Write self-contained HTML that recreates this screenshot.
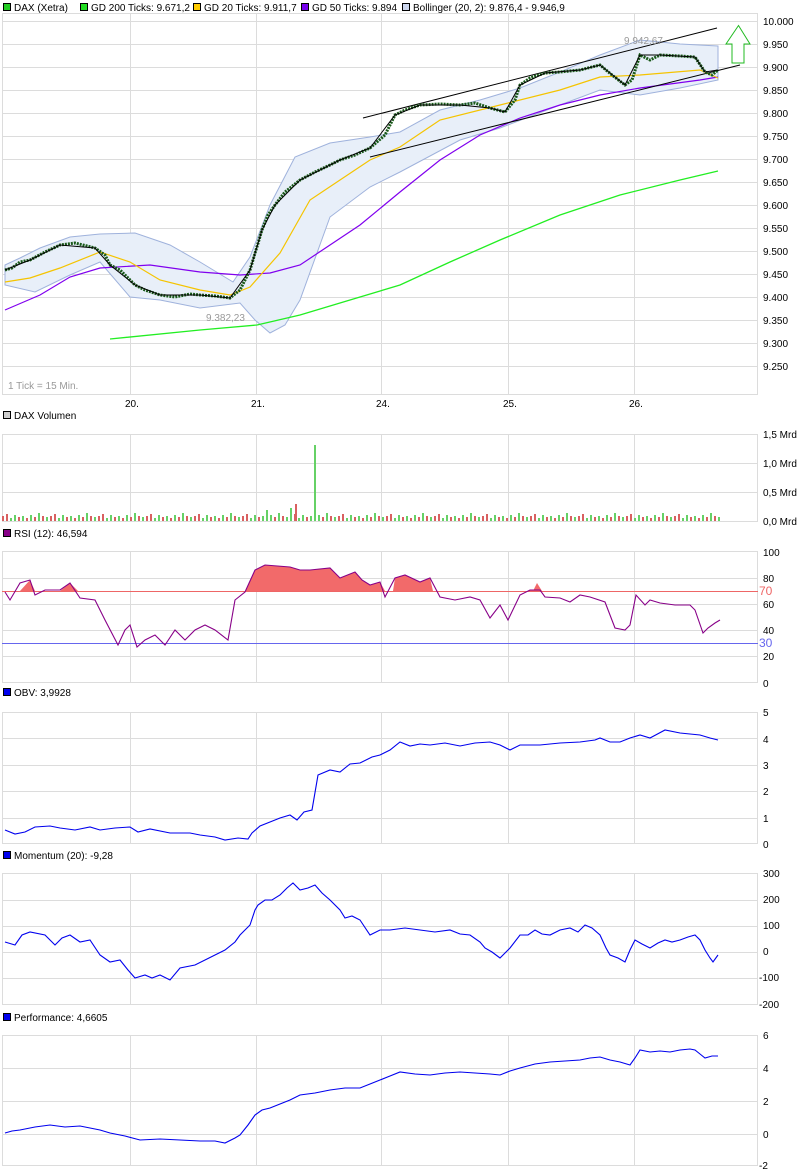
<!DOCTYPE html>
<html><head><meta charset="utf-8"><style>
body{margin:0;background:#fff;width:798px;height:1176px;overflow:hidden;font-family:"Liberation Sans","DejaVu Sans",sans-serif}
svg{display:block}
text{font-family:"Liberation Sans","DejaVu Sans",sans-serif;font-size:10px;fill:#000}
</style></head><body>
<svg width="798" height="1176" viewBox="0 0 798 1176" xmlns="http://www.w3.org/2000/svg">
<defs>
<pattern id="vol" x="2" y="0" width="48" height="522" patternUnits="userSpaceOnUse">
<rect x="0" y="516" width="2" height="5" fill="#d96060"/><rect x="4" y="514" width="2" height="7" fill="#d96060"/><rect x="8" y="518" width="2" height="3" fill="#66d166"/><rect x="12" y="515" width="2" height="6" fill="#66d166"/><rect x="16" y="517" width="2" height="4" fill="#d96060"/><rect x="20" y="516" width="2" height="5" fill="#66d166"/><rect x="24" y="518" width="2" height="3" fill="#d96060"/><rect x="28" y="515" width="2" height="6" fill="#66d166"/><rect x="32" y="517" width="2" height="4" fill="#d96060"/><rect x="36" y="513" width="2" height="8" fill="#66d166"/><rect x="40" y="516" width="2" height="5" fill="#d96060"/><rect x="44" y="517" width="2" height="4" fill="#66d166"/>
</pattern>
</defs>
<!-- Legend -->
<g>
<rect x="3.5" y="3.5" width="7" height="7" fill="#22cc22" stroke="#000"/><text x="14" y="11">DAX (Xetra)</text>
<rect x="80.5" y="3.5" width="7" height="7" fill="#22dd22" stroke="#000"/><text x="91" y="11">GD 200 Ticks: 9.671,2</text>
<rect x="193.5" y="3.5" width="7" height="7" fill="#ffcc00" stroke="#000"/><text x="204" y="11">GD 20 Ticks: 9.911,7</text>
<rect x="301.5" y="3.5" width="7" height="7" fill="#7700ee" stroke="#000"/><text x="312" y="11">GD 50 Ticks: 9.894</text>
<rect x="402.5" y="3.5" width="7" height="7" fill="#ccd6ee" stroke="#000"/><text x="413" y="11">Bollinger (20, 2): 9.876,4 - 9.946,9</text>
</g>
<!-- Main frame -->
<g stroke="#dcdcdc" stroke-width="1" fill="none">
<rect x="2.5" y="13.5" width="755" height="381"/>
<path d="M2 21.5H758M2 44.5H758M2 67.5H758M2 90.5H758M2 113.5H758M2 136.5H758M2 159.5H758M2 182.5H758M2 205.5H758M2 228.5H758M2 251.5H758M2 274.5H758M2 297.5H758M2 320.5H758M2 343.5H758M2 366.5H758"/>
<path d="M130.5 13V395M256.5 13V395M381.5 13V395M508.5 13V395M634.5 13V395"/>
</g>
<g font-size="10">
<text x="763" y="25">10.000</text><text x="763" y="48">9.950</text><text x="763" y="71">9.900</text><text x="763" y="94">9.850</text><text x="763" y="117">9.800</text><text x="763" y="140">9.750</text><text x="763" y="163">9.700</text><text x="763" y="186">9.650</text><text x="763" y="209">9.600</text><text x="763" y="232">9.550</text><text x="763" y="255">9.500</text><text x="763" y="278">9.450</text><text x="763" y="301">9.400</text><text x="763" y="324">9.350</text><text x="763" y="347">9.300</text><text x="763" y="370">9.250</text>
<text x="125" y="407">20.</text><text x="251" y="407">21.</text><text x="376" y="407">24.</text><text x="503" y="407">25.</text><text x="629" y="407">26.</text>
<text x="8" y="389" fill="#999" style="fill:#999">1 Tick = 15 Min.</text>
</g>
<!-- Bollinger band -->
<path d="M5 265L20 258L40 248L70 237L100 234L135 233L170 245L200 262L233 282L250 257L270 205L295 157L330 143L370 137L400 132L440 110L480 100L520 88L560 72L600 55L640 40L680 44L718 46L718 80L680 88L640 95L600 90L560 105L500 128L460 140L400 172L370 187L330 217L300 300L285 325L270 333L255 320L240 303L200 308L160 300L130 297L100 262L70 275L35 292L5 285Z" fill="#e8eff9" stroke="#9fb2dc" stroke-width="1"/>
<!-- GD200 -->
<polyline points="110,339 200,330 257,325 300,315 350,300 400,285 450,262 500,240 560,215 620,195 680,180 718,171" fill="none" stroke="#22ee22" stroke-width="1.3"/>
<!-- GD50 -->
<polyline points="5,310 40,295 70,277 100,268 150,265 200,272 240,275 270,273 300,265 330,245 360,225 400,192 440,160 480,135 520,118 560,105 600,95 640,88 700,80 718,77" fill="none" stroke="#8000ee" stroke-width="1.2"/>
<!-- GD20 -->
<polyline points="5,282 30,278 60,268 100,252 130,262 160,280 200,290 230,295 250,287 280,253 310,200 340,180 370,160 400,147 440,120 500,105 560,90 600,77 640,75 700,70 718,78" fill="none" stroke="#f5c400" stroke-width="1.2"/>
<!-- trend lines -->
<path d="M363 118L717 28M370 157L740 65" stroke="#000" stroke-width="1"/>
<!-- price -->
<polyline points="5,270 12,268 20,262 30,260 45,252 60,245 75,243 95,248 105,255 110,265 120,270 135,285 145,290 160,295 175,297 190,294 200,295 215,296 230,298 240,290 250,270 256,250 262,230 268,215 275,205 285,192 300,180 315,172 330,165 340,160 355,155 370,148 385,135 395,115 405,110 420,105 440,104 460,105 475,103 490,108 505,112 515,100 520,85 530,78 545,73 560,72 580,70 600,65 612,75 625,85 632,80 640,55 650,60 660,55 680,56 695,57 705,72 712,75 718,70" fill="none" stroke="#1a5a1a" stroke-width="3" stroke-dasharray="2 1"/>
<polyline points="5,270 30,260 60,245 95,248 110,265 135,285 160,295 200,295 230,298 250,270 262,230 275,205 300,180 340,160 370,148 395,115 420,105 460,105 490,108 505,112 520,85 545,73 580,70 600,65 625,85 640,55 660,55 695,57 705,72 718,70" fill="none" stroke="#000" stroke-width="1"/>
<text x="624" y="44" style="fill:#999">9.942,67</text>
<text x="206" y="321" style="fill:#999">9.382,23</text>
<!-- arrow -->
<path d="M738.5 25.5L750 44H744V63H732V44H726Z" fill="#fff" stroke="#22bb22" stroke-width="1"/>

<!-- Volume -->
<rect x="3.5" y="411.5" width="7" height="7" fill="#ccc" stroke="#000"/><text x="14" y="419">DAX Volumen</text>
<g stroke="#dcdcdc" fill="none">
<rect x="2.5" y="434.5" width="755" height="87"/>
<path d="M2 463.5H758M2 492.5H758M130.5 434V522M256.5 434V522M381.5 434V522M508.5 434V522M634.5 434V522"/>
</g>
<rect x="2" y="505" width="718" height="16" fill="url(#vol)"/>
<rect x="295" y="504" width="2" height="17" fill="#d96060"/>
<rect x="314" y="445" width="2" height="76" fill="#66d166"/>
<rect x="266" y="510" width="2" height="11" fill="#66d166"/><rect x="290" y="508" width="2" height="13" fill="#66d166"/>
<text x="763" y="438">1,5 Mrd</text><text x="763" y="467">1,0 Mrd</text><text x="763" y="496">0,5 Mrd</text><text x="763" y="525">0,0 Mrd</text>

<!-- RSI -->
<rect x="3.5" y="529.5" width="7" height="7" fill="#880088" stroke="#000"/><text x="14" y="537">RSI (12): 46,594</text>
<g stroke="#dcdcdc" fill="none">
<rect x="2.5" y="551.5" width="755" height="131"/>
<path d="M2 578.5H758M2 604.5H758M2 630.5H758M2 656.5H758M130.5 551V683M256.5 551V683M381.5 551V683M508.5 551V683M634.5 551V683"/>
</g>
<path d="M20 591L30 580L35 591ZM60 591L70 583L78 591ZM245 591L255 570L265 565L290 567L300 570L310 570L330 568L340 578L355 572L362 580L370 585L380 582L385 591ZM393 591L395 578L405 575L420 582L430 578L433 591ZM528 591L530 590L540 590L542 591ZM533 591L537 583L542 591Z" fill="#f26a6a"/>
<path d="M2 591.5H758" stroke="#ee6666"/>
<path d="M2 643.5H758" stroke="#6666ee"/>
<polyline points="5,592 10,600 20,583 30,580 35,595 45,590 60,590 70,583 80,598 95,600 105,620 118,645 125,630 130,625 137,647 145,640 155,635 165,645 175,630 185,640 195,630 205,625 215,630 228,640 235,600 245,592 255,570 265,565 290,567 300,570 310,570 330,568 340,578 355,572 362,580 370,585 380,582 385,597 395,578 405,575 420,582 430,578 440,597 455,600 470,597 480,600 490,618 500,605 508,620 520,595 530,590 540,590 545,597 560,598 570,602 580,595 590,597 605,602 615,628 625,630 630,625 636,595 645,605 650,600 660,603 675,605 690,605 695,610 703,633 708,628 715,623 720,620" fill="none" stroke="#880088" stroke-width="1.1"/>
<text x="763" y="556">100</text><text x="763" y="582">80</text><text x="759" y="595" style="fill:#ee6666;font-size:12px">70</text><text x="763" y="608">60</text><text x="763" y="634">40</text><text x="759" y="647" style="fill:#6666ee;font-size:12px">30</text><text x="763" y="660">20</text><text x="763" y="687">0</text>

<!-- OBV -->
<rect x="3.5" y="688.5" width="7" height="7" fill="#0000ee" stroke="#000"/><text x="14" y="696">OBV: 3,9928</text>
<g stroke="#dcdcdc" fill="none">
<rect x="2.5" y="712.5" width="755" height="131"/>
<path d="M2 738.5H758M2 765.5H758M2 791.5H758M2 818.5H758M130.5 712V844M256.5 712V844M381.5 712V844M508.5 712V844M634.5 712V844"/>
</g>
<polyline points="5,830 15,834 25,832 35,827 50,826 60,828 75,830 90,827 100,830 115,828 130,827 138,832 150,829 170,833 190,833 200,835 215,837 225,840 238,838 248,839 252,833 260,826 270,822 280,818 290,815 297,820 304,812 312,810 318,775 330,770 340,772 350,764 360,763 372,757 380,755 390,750 400,742 410,746 420,744 430,745 445,743 460,746 475,743 490,742 500,745 510,750 520,745 540,745 560,743 580,742 595,740 600,738 610,742 620,742 630,738 640,735 650,738 665,730 680,733 700,735 710,738 718,740" fill="none" stroke="#0000ee" stroke-width="1.1"/>
<text x="763" y="716">5</text><text x="763" y="743">4</text><text x="763" y="769">3</text><text x="763" y="795">2</text><text x="763" y="822">1</text><text x="763" y="848">0</text>

<!-- Momentum -->
<rect x="3.5" y="851.5" width="7" height="7" fill="#0000ee" stroke="#000"/><text x="14" y="859">Momentum (20): -9,28</text>
<g stroke="#dcdcdc" fill="none">
<rect x="2.5" y="873.5" width="755" height="131"/>
<path d="M2 900.5H758M2 926.5H758M2 952.5H758M2 978.5H758M130.5 873V1005M256.5 873V1005M381.5 873V1005M508.5 873V1005M634.5 873V1005"/>
</g>
<polyline points="5,942 15,945 22,935 30,932 45,935 55,945 62,938 70,935 80,942 90,940 100,955 110,962 120,960 128,970 135,978 145,975 152,978 160,975 170,980 180,968 195,965 205,960 215,955 225,950 235,942 240,935 250,925 255,910 258,905 265,900 272,900 280,895 287,888 293,883 300,890 308,888 315,885 322,893 330,900 340,910 345,918 352,916 360,920 370,935 380,930 390,930 405,928 420,930 435,932 450,930 460,934 470,935 480,942 485,948 492,952 500,958 510,948 520,935 528,935 535,930 542,934 550,935 560,930 570,928 578,932 585,925 592,928 600,935 606,948 610,955 618,958 625,962 630,950 635,940 642,944 650,948 658,943 665,940 672,942 680,940 688,937 695,935 700,940 705,950 710,958 713,962 718,955" fill="none" stroke="#0000ee" stroke-width="1.1"/>
<text x="763" y="877">300</text><text x="763" y="903">200</text><text x="763" y="929">100</text><text x="763" y="955">0</text><text x="759" y="981">-100</text><text x="759" y="1008">-200</text>

<!-- Performance -->
<rect x="3.5" y="1013.5" width="7" height="7" fill="#0000ee" stroke="#000"/><text x="14" y="1021">Performance: 4,6605</text>
<g stroke="#dcdcdc" fill="none">
<rect x="2.5" y="1035.5" width="755" height="130"/>
<path d="M2 1068.5H758M2 1101.5H758M2 1134.5H758M130.5 1035V1166M256.5 1035V1166M381.5 1035V1166M508.5 1035V1166M634.5 1035V1166"/>
</g>
<polyline points="5,1133 12,1131 20,1130 35,1127 50,1125 65,1127 80,1126 90,1128 100,1130 110,1133 125,1136 140,1140 160,1139 180,1140 200,1141 215,1141 225,1143 235,1138 240,1135 248,1125 255,1115 262,1110 270,1108 280,1104 290,1100 300,1095 315,1093 330,1090 345,1088 360,1088 370,1084 380,1080 390,1076 400,1072 415,1074 430,1075 445,1073 460,1072 475,1073 490,1074 500,1075 510,1071 520,1068 535,1064 550,1062 565,1061 580,1060 590,1058 600,1057 610,1060 620,1062 630,1065 635,1058 640,1050 650,1052 660,1051 670,1052 680,1050 690,1049 695,1050 700,1054 705,1058 712,1056 718,1056" fill="none" stroke="#0000ee" stroke-width="1.1"/>
<text x="763" y="1039">6</text><text x="763" y="1072">4</text><text x="763" y="1105">2</text><text x="763" y="1138">0</text><text x="759" y="1169">-2</text>
</svg>
</body></html>
